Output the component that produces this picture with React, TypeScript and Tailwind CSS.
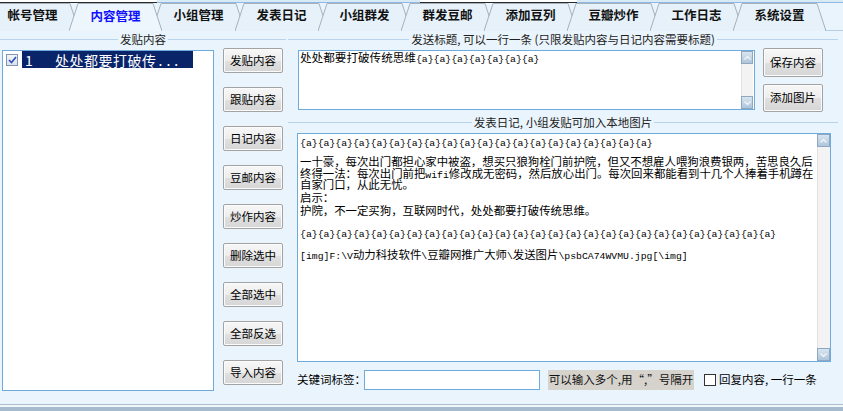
import React from 'react'

const TABS = ['帐号管理', '内容管理', '小组管理', '发表日记', '小组群发', '群发豆邮', '添加豆列', '豆瓣炒作', '工作日志', '系统设置']
const SIDE_BUTTONS = ['发贴内容', '跟贴内容', '日记内容', '豆邮内容', '炒作内容', '删除选中', '全部选中', '全部反选', '导入内容']

const A20 = '{a}'.repeat(20)
const A27 = '{a}'.repeat(27)

// mixed text: ascii runs in a narrow mono face, the rest in the CJK face
function Mixed({ text }: { text: string }) {
  const parts = text.split(/([\x20-\x7e]+)/)
  return (
    <>
      {parts.map((p, i) =>
        /^[\x20-\x7e]+$/.test(p) ? (
          <span key={i} className="font-['Liberation_Mono',monospace] text-[9.8px] tracking-[0px]">{p}</span>
        ) : (
          <span key={i}>{p}</span>
        )
      )}
    </>
  )
}

function Tab({ label, active }: { label: string; active: boolean }) {
  return (
    <div className={`relative w-[83px] shrink-0 flex items-center justify-center ${active ? 'z-10 h-[28px] -mb-[1px]' : 'h-[27px]'}`}>
      <svg className="absolute top-0 -left-[5px] w-[93px] h-[28px]" viewBox="0 0 93 28" preserveAspectRatio="none">
        <path d="M0 28 L9 0.5 L84 0.5 L93 28" fill={active ? '#edf6fc' : '#e6f1fa'} stroke="#a5b1bd" strokeWidth="1" />
      </svg>
      <span className={`relative pb-[2px] text-[12.5px] font-bold leading-none ${active ? 'text-[#1010ff]' : 'text-[#111]'}`}>{label}</span>
    </div>
  )
}

function GroupTitle({ title, className }: { title: string; className?: string }) {
  return (
    <div className={`flex items-center ${className ?? ''}`}>
      <div className="flex-1 h-px bg-[#b9d3ea]" />
      <span className="px-[2px] text-[11.5px] leading-none text-[#222]">{title}</span>
      <div className="flex-1 h-px bg-[#b9d3ea]" />
    </div>
  )
}

function WinButton({ label, className }: { label: string; className?: string }) {
  return (
    <button className={`w-[60px] border border-[#a3a3a3] rounded-[2px] bg-[linear-gradient(#f7f7f7,#ededed_50%,#e0e0e0_51%,#d6d6d6)] shadow-[inset_0_0_0_1px_#fbfbfb] text-[11.5px] leading-none text-black ${className ?? ''}`}>
      {label}
    </button>
  )
}

function Arrow({ up }: { up?: boolean }) {
  return (
    <div className="h-[13px] w-full border border-[#8ea8c1] bg-[linear-gradient(#d9e5f0,#aec5da)] flex items-center justify-center">
      <svg width="7" height="4" viewBox="0 0 7 4">
        <path d={up ? 'M0.5 3.5 L3.5 0.5 L6.5 3.5' : 'M0.5 0.5 L3.5 3.5 L6.5 0.5'} stroke="#f4f8fb" strokeWidth="1.2" fill="none" />
      </svg>
    </div>
  )
}

function ScrollBar({ className }: { className?: string }) {
  return (
    <div className={`h-full flex flex-col bg-[#f3f3f3] ${className ?? ''}`}>
      <Arrow up />
      <div className="flex-1 border-l border-[#e2e2e2]" />
      <Arrow />
    </div>
  )
}

export default function App() {
  return (
    <div className="w-[843px] h-[411px] overflow-hidden flex flex-col bg-[#eaf4fc] font-['Noto_Sans_CJK_SC',sans-serif] text-black">
      {/* strip of the window above */}
      <div className="flex h-[3px] shrink-0">
        <div className="w-[157px] bg-white border-b border-[#2a2a2a]" />
        <div className="w-[263px] bg-[#d9eaf7] border-b border-[#8fb9de]" />
        <div className="w-[157px] bg-white border-b border-[#2a2a2a]" />
        <div className="flex-1 bg-[#d9eaf7] border-b border-[#8fb9de]" />
      </div>

      {/* tabs */}
      <div className="flex items-end h-[28px] shrink-0 border-b border-[#b8cfe3]">
        <div className="flex items-end -ml-[9px]">
          {TABS.map((t, i) => (
            <Tab key={t} label={t} active={i === 1} />
          ))}
        </div>
      </div>

      {/* panel */}
      <div className="flex flex-1">
        {/* left group */}
        <div className="w-[286px] flex flex-col">
          <GroupTitle title="发贴内容" className="h-[17px]" />
          <div className="flex">
            <div className="ml-[2px] mt-[2px] w-[212px] h-[341px] bg-white border border-[#6eaadc]">
              <div className="flex items-center h-[17px]">
                <span className="ml-[3px] w-[12px] h-[12px] border border-[#8197b0] bg-[linear-gradient(#f4f6f9,#d9e1ea)] flex items-center justify-center">
                  <svg width="9" height="8" viewBox="0 0 9 8">
                    <path d="M1 4 L3.5 6.5 L8 1" stroke="#2d4fb8" strokeWidth="1.6" fill="none" />
                  </svg>
                </span>
                <div className="ml-[4px] w-[171px] h-[17px] bg-[#0a246a] flex items-center text-white text-[14px] leading-none">
                  <span className="w-[33px] pl-[3px]">1</span>
                  <span className="tracking-[0.5px]">处处都要打破传</span>
                  <span className="tracking-[4px] pl-[2px]">...</span>
                </div>
              </div>
            </div>
            <div className="ml-[9px] flex flex-col gap-[14px]">
              {SIDE_BUTTONS.map(b => (
                <WinButton key={b} label={b} className="h-[25px]" />
              ))}
            </div>
          </div>
        </div>

        {/* right group */}
        <div className="ml-[2px] w-[550px] flex flex-col">
          <GroupTitle title="发送标题, 可以一行一条 (只限发贴内容与日记内容需要标题)" className="h-[17px]" />
          <div className="flex items-start h-[64px]">
            <div className="ml-[10px] mt-[2px] w-[457px] h-[60px] bg-white border border-[#6eaadc] flex">
              <div className="flex-1 pl-[1px] text-[11.6px] leading-[12px] whitespace-pre">
                <Mixed text="处处都要打破传统思维{a}{a}{a}{a}{a}{a}{a}" />
              </div>
              <ScrollBar className="w-[12px] mr-[1px]" />
            </div>
            <div className="ml-[8px] flex flex-col">
              <WinButton label="保存内容" className="h-[29px]" />
              <WinButton label="添加图片" className="h-[28px] mt-[7px]" />
            </div>
          </div>
          <GroupTitle title="发表日记, 小组发贴可加入本地图片" className="h-[21px]" />
          <div className="ml-[9px] w-[534px] h-[229px] bg-white border border-[#6eaadc] flex">
            <div className="flex-1 pl-[2px] pt-[1px] text-[11.4px] whitespace-pre">
              <div className="h-[12px] leading-[12px]"><Mixed text={A20} /></div>
              <div className="h-[9px]" />
              <div className="h-[11.5px] leading-[11.5px]"><Mixed text="一十豪，每次出门都担心家中被盗，想买只狼狗栓门前护院，但又不想雇人喂狗浪费银两，苦思良久后" /></div>
              <div className="h-[11.5px] leading-[11.5px]"><Mixed text="终得一法：每次出门前把wifi修改成无密码，然后放心出门。每次回来都能看到十几个人捧着手机蹲在" /></div>
              <div className="h-[11.5px] leading-[11.5px]"><Mixed text="自家门口，从此无忧。" /></div>
              <div className="h-[13px] leading-[13px]"><Mixed text="启示：" /></div>
              <div className="h-[13px] leading-[13px]"><Mixed text="护院，不一定买狗，互联网时代，处处都要打破传统思维。" /></div>
              <div className="h-[9px]" />
              <div className="h-[12px] leading-[12px]"><Mixed text={A27} /></div>
              <div className="h-[10px]" />
              <div className="h-[12px] leading-[12px]"><Mixed text={'[img]F:\\V动力科技软件\\豆瓣网推广大师\\发送图片\\psbCA74WVMU.jpg[\\img]'} /></div>
            </div>
            <ScrollBar className="w-[13px]" />
          </div>
          <div className="flex items-center mt-[8px] h-[20px] text-[11.5px] leading-none">
            <span className="ml-[9px] w-[63px] whitespace-nowrap">关键词标签：</span>
            <div className="ml-[4px] w-[176px] h-[20px] bg-white border border-[#6eaadc]" />
            <div className="ml-[8px] w-[146px] h-[20px] bg-[#d6d3cd] flex items-center justify-center text-[#111]">
              可以输入多个,用“,”号隔开
            </div>
            <span className="ml-[10px] w-[12px] h-[12px] border border-[#333] bg-white" />
            <span className="ml-[3px] whitespace-nowrap">回复内容, 一行一条</span>
          </div>
        </div>
      </div>

      {/* bottom edge */}
      <div className="h-[7px] shrink-0 border-t border-[#aebfcf] bg-[#f1f6fa] flex flex-col">
        <div className="h-[2px]" />
        <div className="flex-1 bg-[#a6bbcd]" />
      </div>
    </div>
  )
}
